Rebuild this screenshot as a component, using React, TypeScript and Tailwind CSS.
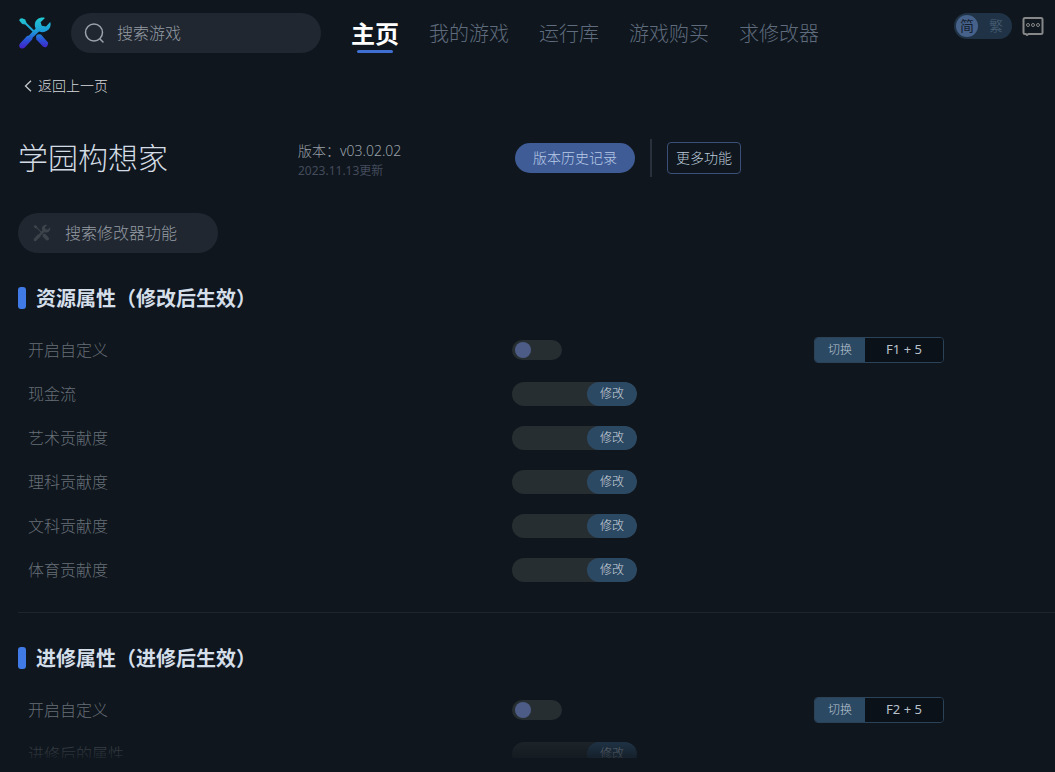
import { useState } from 'react';

type Option = {
  id: string;
  label: string;
  hotkey?: string;
};

type Section = {
  id: string;
  title: string;
  options: Option[];
};

const navItems = ['主页', '我的游戏', '运行库', '游戏购买', '求修改器'];

const sections: Section[] = [
  {
    id: 'resource',
    title: '资源属性（修改后生效）',
    options: [
      { id: 'resource-custom', label: '开启自定义', hotkey: 'F1 + 5' },
      { id: 'cash', label: '现金流' },
      { id: 'art', label: '艺术贡献度' },
      { id: 'science', label: '理科贡献度' },
      { id: 'liberal', label: '文科贡献度' },
      { id: 'sports', label: '体育贡献度' },
    ],
  },
  {
    id: 'study',
    title: '进修属性（进修后生效）',
    options: [
      { id: 'study-custom', label: '开启自定义', hotkey: 'F2 + 5' },
      { id: 'study-attr', label: '进修后的属性' },
    ],
  },
];

function ToolShapes() {
  return (
    <>
      {/* screwdriver */}
      <path d="M1.2 4.6Q1.4 2.2 4 2.2L7.2 3.6 8.6 7 18.6 16.800 17.2 18.200 7.200 8.400 4.200 8Z" />
      <path d="M18 20.400Q18.600 18 21.200 18.200L23 18.600 29.800 26.200Q31 28.400 29 30.400 27 32 25 30.600L18.400 23.600Z" />
      {/* wrench */}
      <path d="M27 2C22.600.6 18.200 3 17 7 16.600 9 16.800 10.600 17.600 12.400L14.400 15.800 11 19.400 9 20 2 27.400C.8 29 1 31 2.400 32 4 33 5.600 32.600 6.800 31.400L14.200 23.600 14.600 21.800 21 15.400C25.400 17.200 30 15.600 32 11.600 32.800 9.600 32.800 7.600 32.200 6L28 10.600 23.800 9.800 22.600 6.200Z" />
    </>
  );
}

function Logo() {
  return (
    <svg viewBox="0 0 34 34" className="h-[34px] w-[34px] shrink-0" aria-hidden="true">
      <defs>
        <linearGradient id="logo-fill" x1="0" y1="0" x2="0" y2="34" gradientUnits="userSpaceOnUse">
          <stop offset="0" stopColor="#22d0cf" />
          <stop offset="0.45" stopColor="#1d9bd8" />
          <stop offset="0.72" stopColor="#2a4fd6" />
          <stop offset="1" stopColor="#4a18c4" />
        </linearGradient>
      </defs>
      <g fill="url(#logo-fill)">
        <ToolShapes />
      </g>
    </svg>
  );
}

function Switch({ id }: { id: string }) {
  return (
    <div className="relative h-5 w-[50px]">
      <input
        id={id}
        type="checkbox"
        className="peer block h-5 w-[50px] cursor-pointer appearance-none rounded-full bg-[#272e32]"
      />
      <span className="pointer-events-none absolute top-0.5 left-[3px] h-4 w-4 rounded-full bg-[#4d5c87] peer-checked:left-[31px]" />
    </div>
  );
}

function ValueInput({ id }: { id: string }) {
  return (
    <div className="flex h-6 w-[125px] overflow-hidden rounded-full bg-[#272e32]">
      <input id={id} type="text" className="min-w-0 flex-1 bg-transparent pl-3 text-xs text-[#c5cdd6] outline-none" />
      <button type="button" className="w-[50px] rounded-full bg-[#2c4964] text-xs text-[#cdd5dd]">
        修改
      </button>
    </div>
  );
}

function Hotkey({ keys }: { keys: string }) {
  return (
    <div className="flex h-[26px] w-[130px] overflow-hidden rounded border border-[#2b4257] text-xs">
      <button type="button" className="w-[50px] bg-[#2c4964] text-[#bac6d2]">
        切换
      </button>
      <span className="flex flex-1 items-center justify-center bg-[#0b1119] text-[13px] font-normal text-[#b9c2cc]">
        {keys}
      </span>
    </div>
  );
}

export default function App() {
  const [active, setActive] = useState('主页');

  return (
    <div className="flex h-screen flex-col overflow-hidden bg-[#0f161d] font-['Noto_Sans','Noto_Sans_CJK_SC',sans-serif] font-light">
      <header className="flex items-start pt-[13px] pr-[11px] pb-[13px] pl-[18px]">
        <div className="flex h-10 items-center">
          <Logo />
          <label className="ml-[19px] flex h-10 w-[250px] items-center rounded-full bg-[#202730] pl-[13px]">
            <svg viewBox="0 0 22 22" className="h-[22px] w-[22px] shrink-0" fill="none" stroke="#9aa2ab" strokeWidth="1.5" aria-hidden="true">
              <circle cx="10" cy="10.5" r="8.5" />
              <path d="m16 17 3 3" strokeLinecap="round" />
            </svg>
            <input
              type="text"
              aria-label="搜索游戏"
              placeholder="搜索游戏"
              className="ml-[11px] min-w-0 flex-1 bg-transparent text-base text-[#c5cdd6] outline-none placeholder:text-[#959ca4]"
            />
          </label>
          <nav className="ml-[30px] flex h-10 items-center gap-[30px] pt-0.5 whitespace-nowrap">
            {navItems.map((item) => (
              <a
                key={item}
                href="#"
                onClick={() => setActive(item)}
                className={
                  item === active
                    ? 'relative text-2xl font-bold text-white'
                    : 'relative text-xl text-[#5f6c7e]'
                }
              >
                {item}
                {item === active && (
                  <span className="absolute bottom-[-3px] left-1.5 h-[3px] w-9 rounded-full bg-[#3f6fd0]" />
                )}
              </a>
            ))}
          </nav>
        </div>

        <div className="ml-auto flex h-[26px] items-center gap-[10px]">
          <div className="flex h-[26px] w-[58px] items-center rounded-full bg-[#203346] px-0.5 text-sm">
            <button type="button" className="h-[22px] w-[22px] rounded-full bg-[#47628a] text-center leading-[22px] font-normal text-[#142030]">
              简
            </button>
            <button type="button" className="flex-1 pl-1 text-center leading-[22px] text-[#4c647b]">
              繁
            </button>
          </div>
          <button type="button" aria-label="消息">
            <svg viewBox="0 0 22 20" className="h-5 w-[22px]" fill="none" stroke="#858789" aria-hidden="true">
              <path d="M3 2h16a1.5 1.5 0 0 1 1.5 1.5v13A1.5 1.5 0 0 1 19 18H6.5L5 19 3.8 18H3a1.5 1.5 0 0 1-1.5-1.5v-13A1.5 1.5 0 0 1 3 2Z" strokeWidth="2" />
              <circle cx="6" cy="9" r="1.5" />
              <circle cx="11" cy="9" r="1.5" />
              <circle cx="16" cy="9" r="1.5" />
            </svg>
          </button>
        </div>
      </header>

      <div className="flex h-10 shrink-0 items-center pl-6">
        <a href="#" className="flex items-center gap-1.5 text-sm text-[#d5d8db]">
          <svg viewBox="0 0 8 12" className="h-3 w-2" fill="none" stroke="#c3c7cb" strokeWidth="1.3" aria-hidden="true">
            <path d="M7 .8 1.5 6 7 11.2" />
          </svg>
          返回上一页
        </a>
      </div>

      <div className="mt-[33px] flex h-[38px] shrink-0 items-center pl-[18px]">
        <h1 className="w-[280px] text-3xl text-[#d3dbe4]">学园构想家</h1>
        <div className="w-[217px] pt-1.5">
          <p className="text-sm leading-5 text-[#9aa1a9]">版本：v03.02.02</p>
          <p className="text-xs leading-5 font-normal text-[#434b5c]">2023.11.13更新</p>
        </div>
        <button type="button" className="h-[30px] w-[120px] rounded-full bg-[#3f5c96] text-sm text-[#b9cbe8]">
          版本历史记录
        </button>
        <span className="ml-[15px] h-[38px] w-0.5 bg-[#29313d]" />
        <button type="button" className="ml-[15px] h-8 w-[74px] rounded border border-[#3a5078] text-sm text-[#bccadb]">
          更多功能
        </button>
      </div>

      <div className="mt-9 shrink-0 pl-[18px]">
        <label className="flex h-10 w-[200px] items-center rounded-full bg-[#202730] pl-[15px]">
          <svg viewBox="0 0 34 34" className="h-[18px] w-[18px] shrink-0" fill="#3c434a" aria-hidden="true">
            <ToolShapes />
          </svg>
          <input
            type="text"
            aria-label="搜索修改器功能"
            placeholder="搜索修改器功能"
            className="ml-[14px] min-w-0 flex-1 bg-transparent text-base text-[#c5cdd6] outline-none placeholder:text-[#959ca4]"
          />
        </label>
      </div>

      <main className="relative mb-[14px] min-h-0 flex-1 overflow-hidden pl-[18px]">
        {sections.map((section) => (
          <section key={section.id} className="border-b border-[#1e252d] py-5">
            <h2 className="flex h-[50px] items-center gap-[10px] text-xl font-bold text-[#d5dfea]">
              <span className="h-[22px] w-2 rounded-[3px] bg-[#3f7ae6]" />
              <span className="pt-0.5">{section.title}</span>
            </h2>
            <ul className="pt-[5px]">
              {section.options.map((option) => (
                <li key={option.id} className="grid h-11 grid-cols-[494fr_302fr_241fr] items-center">
                  <label htmlFor={option.id} className="pl-[10px] text-base text-[#676f78]">
                    {option.label}
                  </label>
                  {option.hotkey ? <Switch id={option.id} /> : <ValueInput id={option.id} />}
                  {option.hotkey && <Hotkey keys={option.hotkey} />}
                </li>
              ))}
            </ul>
          </section>
        ))}
        {/* fade at the end of the list */}
        <div className="pointer-events-none absolute inset-x-0 bottom-0 h-9 bg-gradient-to-t from-[#0f161d]/80 to-[#0f161d]/0" />
      </main>
    </div>
  );
}
